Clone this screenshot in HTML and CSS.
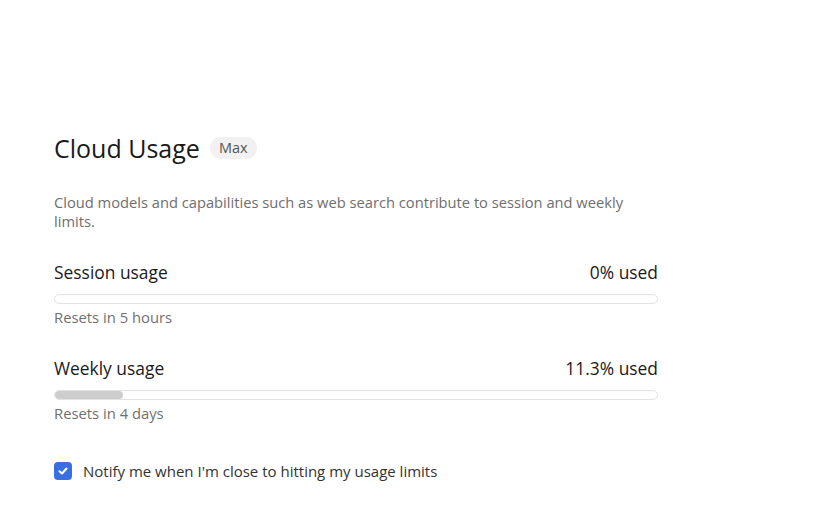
FILE: index.html
```html
<!DOCTYPE html>
<html lang="en">
<head>
    <meta charset="UTF-8">
    <meta name="viewport" content="width=device-width, initial-scale=1.0">
    <title>Cloud Usage</title>
    <link rel="stylesheet" href="styles.css">
</head>
<body>
    <div class="container">
        <div class="title-row">
            <h1>Cloud Usage</h1>
            <span class="plan-badge">Max</span>
        </div>

        <p class="description">Cloud models and capabilities such as web search contribute to session and weekly limits.</p>

        <!-- Session limit -->
        <div class="usage-block">
            <div class="usage-head">
                <span>Session usage</span>
                <span>0% used</span>
            </div>
            <div class="usage-bar"><div class="usage-fill" style="width: 0%"></div></div>
            <div class="usage-reset">Resets in 5 hours</div>
        </div>

        <!-- Weekly limit -->
        <div class="usage-block">
            <div class="usage-head">
                <span>Weekly usage</span>
                <span>11.3% used</span>
            </div>
            <div class="usage-bar"><div class="usage-fill" style="width: 11.3%"></div></div>
            <div class="usage-reset">Resets in 4 days</div>
        </div>

        <label class="notify">
            <span class="check-box">
                <svg width="12" height="12" viewBox="0 0 12 12"><path d="M2.5 6.2 L5 8.5 L9.5 3.5" fill="none" stroke="#fff" stroke-width="2" stroke-linecap="round" stroke-linejoin="round"/></svg>
            </span>
            <span>Notify me when I'm close to hitting my usage limits</span>
        </label>
    </div>
</body>
</html>
```

FILE: styles.css
```css
body {
    margin: 0;
    background: #fff;
    color: #1a1a1a;
    font-family: "Open Sans", "Noto Sans", sans-serif;
}

.container {
    width: 604px;
    padding: 130px 0 0 54px;
}

.title-row {
    display: flex;
    align-items: center;
    gap: 10px;
}

h1 {
    margin: 0;
    font-size: 25px;
    font-weight: 400;
    line-height: 36px;
}

.plan-badge {
    background: #f1f1f1;
    color: #555;
    font-size: 14.5px;
    padding: 1px 9px 2px;
    border-radius: 11px;
    line-height: 19px;
}

.description {
    margin: 27px 0 0;
    font-size: 14.7px;
    line-height: 19px;
    color: #6e6e6e;
}

.usage-block {
    margin-top: 29px;
}

.usage-head {
    display: flex;
    justify-content: space-between;
    font-size: 17.4px;
    line-height: 24px;
}

.usage-bar {
    margin-top: 10px;
    height: 8px;
    border: 1px solid #e3e3e3;
    border-radius: 6px;
    overflow: hidden;
}

.usage-fill {
    height: 100%;
    background: #cdcdcd;
    border-radius: 6px;
}

.usage-reset {
    margin-top: 3px;
    font-size: 14.8px;
    line-height: 20px;
    color: #707070;
}

.notify {
    display: flex;
    align-items: center;
    gap: 11px;
    margin-top: 38px;
    font-size: 15px;
    color: #333;
}

.check-box {
    width: 18px;
    height: 18px;
    border-radius: 4px;
    background: #3a6fe2;
    display: flex;
    align-items: center;
    justify-content: center;
}
```
